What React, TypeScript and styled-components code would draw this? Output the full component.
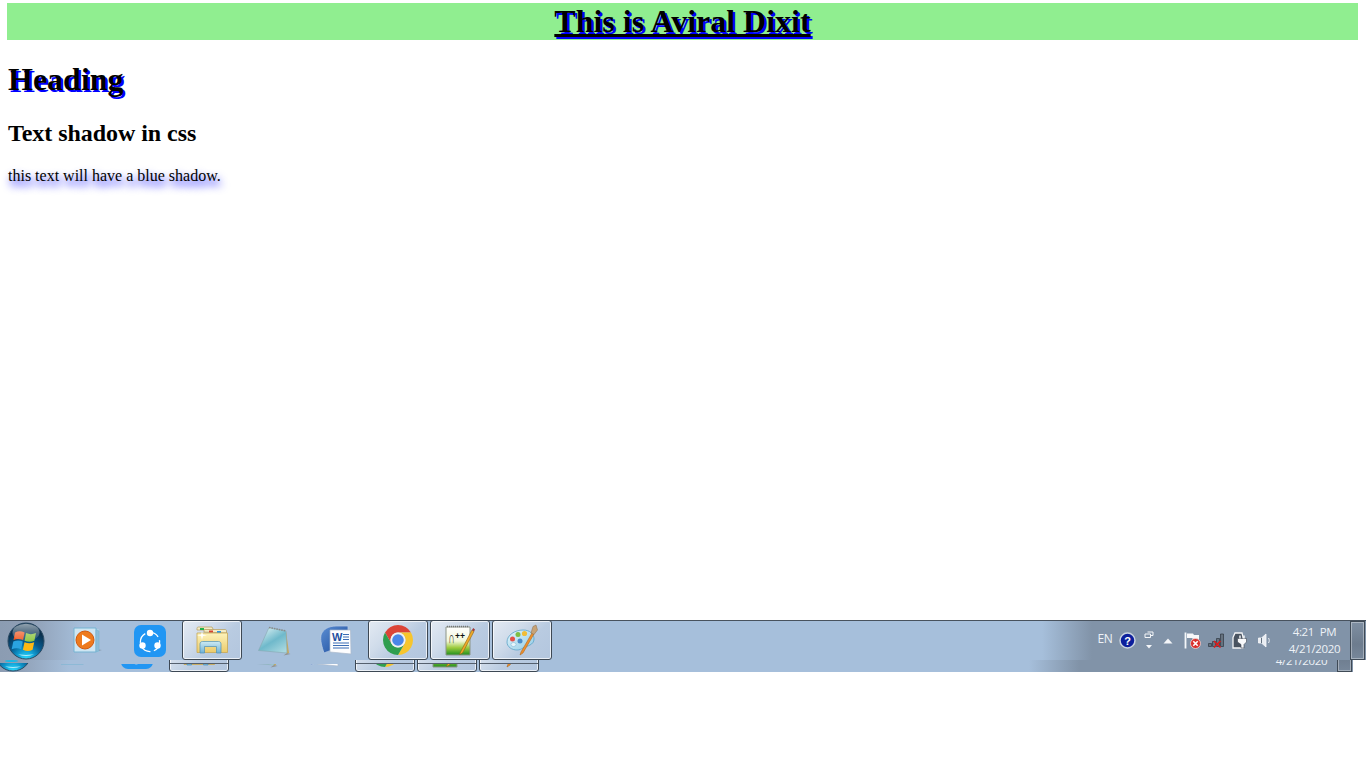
import React from "react";
import styled, { createGlobalStyle } from "styled-components";

const Global = createGlobalStyle`
  html, body { margin: 0; padding: 0; background: #fff; }
  body { font-family: "Liberation Serif", "Times New Roman", serif; color: #000; overflow: hidden; }
`;

const Page = styled.div`
  width: 1366px;
  height: 768px;
  display: flex;
  flex-direction: column;
  background: #fff;
  overflow: hidden;
`;
const Content = styled.main`
  flex: 1;
  padding: 3px 8px 0 8px;
`;
const Banner = styled.h1`
  margin: 0 0 0 -1px;
  height: 37px;
  line-height: 37px;
  background: #90ee90;
  text-align: center;
  font-size: 32px;
  font-weight: 700;
  text-decoration: underline;
  text-shadow: 2px 2px blue;
`;
const Heading = styled.h1`
  margin: 21px 0 0;
  font-size: 32px;
  line-height: 37px;
  font-weight: 700;
  text-shadow: 2px 2px blue;
`;
const SubHeading = styled.h2`
  margin: 22px 0 0;
  font-size: 24px;
  line-height: 27px;
  font-weight: 700;
  letter-spacing: -0.05px;
`;
const Para = styled.p`
  margin: 20px 0 0;
  font-size: 16px;
  line-height: 18px;
  text-shadow: 2px 5px 8px blue;
`;

const Taskbar = styled.div`
  height: 52px;
  margin-bottom: 96px;
  flex: none;
  overflow: hidden;
`;
const Row = styled.div`
  box-sizing: border-box;
  width: 1366px;
  height: 40px;
  display: flex;
  align-items: stretch;
  border-top: 1px solid #48525e;
  background: linear-gradient(90deg, #8b9cb2 0, #8f9fb5 30px, #a6bfdb 82px, #a6bfdb 1042px, #8193a8 1092px, #8193a8 100%);
`;
const GhostClip = styled.div`
  position: relative;
  height: 12px;
  overflow: hidden;
`;
const OrbGlint = styled.div`
  position: absolute;
  left: 5px;
  top: 0;
  width: 13px;
  height: 2px;
  border-radius: 50%;
  background: #19b9e6;
`;
const GhostInner = styled.div`
  margin: -28px 0 0 -13px;
`;
const StartSlot = styled.div`
  width: 58px;
  flex: none;
  box-sizing: border-box;
`;
const OrbBox = styled.div<{ $ghost?: boolean }>`
  height: 100%;
  display: flex;
  align-items: center;
  padding-left: 7px;
  ${(p) => (p.$ghost ? `clip-path: inset(30px 0 0 0);` : ``)}
`;
const Slot = styled.div<{ $active?: boolean; $ghost?: boolean }>`
  position: relative;
  width: 60px;
  margin-right: 2px;
  flex: none;
  box-sizing: border-box;
  border-radius: 3px;
  ${(p) =>
    p.$active
      ? `margin-top: -1px;
         border: 1px solid #3d4854;
         box-shadow: inset 0 0 0 1px rgba(255,255,255,.7);
         background: linear-gradient(135deg, #e3eaf3 0%, #cfdbea 35%, #b9cbe1 60%, #b3c6de 100%);`
      : ``}
  ${(p) =>
    p.$active && p.$ghost
      ? `&::after {
           content: "";
           position: absolute;
           left: 0;
           right: 0;
           top: 30px;
           height: 1px;
           background: #55606e;
         }`
      : ``}
`;
const IconBox = styled.div<{ $ghost?: boolean }>`
  height: 100%;
  display: flex;
  align-items: center;
  justify-content: center;
  ${(p) => (p.$ghost ? `clip-path: inset(31px 0 0 0);` : ``)}
`;
const Tray = styled.div`
  margin-left: auto;
  display: flex;
  align-items: stretch;
  color: #eef2f7;
  font-family: "Open Sans", "Noto Sans", sans-serif;
`;
const TraySlot = styled.div<{ $w: number }>`
  width: ${(p) => p.$w}px;
  flex: none;
  display: flex;
  align-items: center;
  justify-content: center;
`;
const Lang = styled(TraySlot)`
  font-size: 12px;
  letter-spacing: -0.4px;
  padding-bottom: 4px;
  box-sizing: border-box;
`;
const Clock = styled.div<{ $ghost?: boolean }>`
  width: 74px;
  flex: none;
  box-sizing: border-box;
  padding: ${(p) => (p.$ghost ? "19.5px" : "3px")} 0 0 3px;
  text-align: center;
  font-size: 11.5px;
  line-height: 16.5px;
  letter-spacing: -0.35px;
  word-spacing: 3px;
`;
const ShowDesktop = styled.div`
  width: 15px;
  margin-right: 1px;
  flex: none;
  box-sizing: border-box;
  border: 1px solid #3f4a56;
  box-shadow: inset 0 0 0 1px rgba(255, 255, 255, 0.35);
  background: linear-gradient(180deg, #7f8fa2, #6d7c8e 60%, #77879a);
`;

const Orb = () => (
  <svg width="38" height="38" viewBox="0 0 38 38">
    <defs>
      <radialGradient id="orbBody" cx="50%" cy="100%" r="80%">
        <stop offset="0" stopColor="#2fdcff" />
        <stop offset=".28" stopColor="#12a4d8" />
        <stop offset=".6" stopColor="#075a8e" />
        <stop offset="1" stopColor="#0a2f4c" />
      </radialGradient>
      <linearGradient id="orbGloss" x1="0" y1="0" x2="0" y2="1">
        <stop offset="0" stopColor="#fff" stopOpacity=".55" />
        <stop offset="1" stopColor="#fff" stopOpacity=".05" />
      </linearGradient>
    </defs>
    <circle cx="19" cy="19" r="18" fill="url(#orbBody)" stroke="#2b4a63" strokeWidth="1" />
    <path d="M8 10.5c3.2-1.6 6-1.6 9.6 0l-1.5 7.6c-3.2-1.5-6-1.5-9.600 0z" fill="#ef5a24" />
    <path d="M19 11c3.500 1.500 6.300 1.500 10 0l-1.600 7.700c-3.400 1.500-6.300 1.500-9.800 0z" fill="#8cc63f" />
    <path d="M6.300 19.600c3.400-1.500 6.200-1.500 9.500 0l-1.600 7.700c-3.300-1.500-6.100-1.500-9.500 0z" fill="#2aa3e0" />
    <path d="M17.500 20.200c3.400 1.500 6.300 1.500 9.700 0l-1.600 7.600c-3.400 1.600-6.300 1.600-9.700 0z" fill="#fdb813" />
    <ellipse cx="19" cy="10.500" rx="13.500" ry="8.800" fill="url(#orbGloss)" />
    <path d="M11 32.500c5 1.600 11 1.600 16 0-5 .6-11 .6-16 0z" fill="#dffaff" />
  </svg>
);

const MediaPlayer = () => (
  <svg width="30" height="27" viewBox="0 0 30 27">
    <path d="M24 2h2v23h-2z" fill="#a8cfe2" />
    <path d="M1 1h22v24H1z" fill="#cfe6f2" stroke="#75b3d2" />
    <path d="M23 3l3 1v20l-3 1z" fill="#8dbdd6" stroke="#75b3d2" strokeWidth=".6" />
    <path d="M26 24l3-1-3-.5z" fill="#8a9fb3" />
    <circle cx="12" cy="13" r="9" fill="#ee7a1c" stroke="#d2590d" />
    <path d="M9 7.500l9 5.500-9 5.500z" fill="#fff" />
  </svg>
);

const ShareIt = () => (
  <svg width="32" height="32" viewBox="0 0 32 32">
    <rect width="32" height="32" rx="7" fill="#2196f3" />
    <circle cx="16" cy="17" r="9.600" fill="none" stroke="#fff" strokeWidth="1.300" strokeDasharray="11 3.500" />
    <circle cx="16" cy="8" r="3.200" fill="#fff" />
    <circle cx="8.500" cy="20.500" r="3.200" fill="#fff" />
    <circle cx="23.500" cy="20.500" r="3.200" fill="#fff" />
  </svg>
);

const Folder = () => (
  <svg width="32" height="29" viewBox="0 0 32 29">
    <defs>
      <linearGradient id="fold" x1="0" y1="0" x2="0" y2="1">
        <stop offset="0" stopColor="#fdf3bb" />
        <stop offset="1" stopColor="#eccb6b" />
      </linearGradient>
      <linearGradient id="foldBlue" x1="0" y1="0" x2="0" y2="1">
        <stop offset="0" stopColor="#cdeaf3" />
        <stop offset="1" stopColor="#6fb2d6" />
      </linearGradient>
    </defs>
    <path d="M1 4V2.500C1 1.500 1.500 1 2.500 1H16l1.500 3z" fill="#f3ecc8" stroke="#b59b59" strokeWidth=".7" />
    <rect x="4" y="2" width="4" height="2" fill="#22b34b" />
    <path d="M8 6V4.500c0-.8.500-1 1-1h20c1 0 1.500.500 1.500 1.500V7z" fill="#f3ecc8" stroke="#b59b59" strokeWidth=".7" />
    <rect x="13" y="4.500" width="4" height="2" fill="#d8412f" />
    <rect x="21" y="5" width="4" height="2" fill="#2f95dd" />
    <path d="M1 7h30.500v19.500H1z" fill="url(#fold)" stroke="#c6a754" strokeWidth=".8" />
    <path d="M4 27V18c0-1.500 1-2.500 2.500-2.500h16c1.500 0 2.500 1 2.500 2.500v9h-4.500v-6.500h-12V27z" fill="url(#foldBlue)" stroke="#4e90b8" strokeWidth=".7" />
    <path d="M5 10l1 4 1-4 4-.8-4-.8-1-3-1 3-4 .8z" fill="#fff" opacity=".95" />
  </svg>
);

const Notepad = () => (
  <svg width="33" height="30" viewBox="258 625 33 30">
    <defs>
      <linearGradient id="npad" x1="0.1" y1="0" x2="0.8" y2="1">
        <stop offset="0" stopColor="#e2f4f6" />
        <stop offset=".55" stopColor="#6fb9cb" />
        <stop offset="1" stopColor="#a9d8e0" />
      </linearGradient>
    </defs>
    <path d="M287 652l3.500 1-7 1.500z" fill="#8f8f8f" />
    <path d="M286 630l3 22-3 .5z" fill="#c8a85c" />
    <path d="M269 626.500l17 3.500 1 22-28.500-2.500z" fill="url(#npad)" stroke="#86a8b0" strokeWidth=".6" />
    <path d="M269 626.500l17 3.500" stroke="#8a8a8a" strokeWidth="1.600" strokeDasharray="1.500 1" />
  </svg>
);

const Word = ({ plain }: { plain?: boolean }) => (
  <svg width="32" height="31" viewBox="0 0 32 31">
    <defs>
      <linearGradient id="wblue" x1="0" y1="0" x2="1" y2="1">
        <stop offset="0" stopColor="#5c8ed3" />
        <stop offset="1" stopColor="#1a4a9a" />
      </linearGradient>
    </defs>
    <path d="M1 10c2-6 8-9 15-9h12v22c-6 0-15 1-24 5C2 22 0 16 1 10z" fill="url(#wblue)" stroke="#b6c9e2" strokeWidth=".8" />
    <path d="M10 5h20.500l.5 24-21-2z" fill="#fdfdfe" stroke="#aab9cc" strokeWidth=".7" />
    {!plain && (
      <text x="12" y="15.500" fontFamily="Liberation Sans, sans-serif" fontWeight="700" fontSize="11" fill="#1d4f9e">
        W
      </text>
    )}
    <path d="M23 9.500h6M23 12h6M23 14.500h6M13 18h16M13 20.500h16M13 23h16" stroke="#3b6cb4" strokeWidth="1.100" />
  </svg>
);

const Chrome = () => (
  <svg width="30" height="30" viewBox="2 2 44 44">
    <path d="M4.950 13A22 22 0 0 1 43.050 13H24A11 11 0 0 0 14.470 29.500Z" fill="#db4437" />
    <path d="M43.050 13A22 22 0 0 1 24 46L33.530 29.500A11 11 0 0 0 24 13Z" fill="#f7c52d" />
    <path d="M4.950 13L14.470 29.500A11 11 0 0 0 33.530 29.500L24 46A22 22 0 0 1 4.950 13Z" fill="#2f9e4f" />
    <circle cx="24" cy="24" r="11" fill="#f1f1f1" />
    <circle cx="24" cy="24" r="8.500" fill="#4a86e8" />
  </svg>
);

const NotepadPP = ({ plain }: { plain?: boolean }) => (
  <svg width="32" height="32" viewBox="0 0 32 32">
    <defs>
      <linearGradient id="npp" x1="0" y1="0" x2="0" y2="1">
        <stop offset="0" stopColor="#fff" />
        <stop offset=".5" stopColor="#f2f7d9" />
        <stop offset=".74" stopColor="#9ccb3e" />
        <stop offset="1" stopColor="#1f8f1f" />
      </linearGradient>
    </defs>
    <path d="M2 3h24v28H2z" fill="url(#npp)" stroke="#8c9488" />
    <path d="M3 2.500h21" stroke="#777" strokeWidth="1.500" strokeDasharray="1 1" />
    {!plain && (
      <>
        <text transform="translate(4.500 19) scale(.75 1.500)" fontFamily="Liberation Sans, sans-serif" fontWeight="700" fontSize="11" fill="#111">
          ∩
        </text>
        <text x="11" y="15" fontFamily="Liberation Sans, sans-serif" fontWeight="700" fontSize="8.500" fill="#111">
          ++
        </text>
      </>
    )}
    <path d="M17 27l-1.500 3.500 3-1.500L30 7.500l-2-1.500z" fill="#eea928" stroke="#8d6516" strokeWidth=".6" />
    <path d="M28 6l2 1.500 1-2-1.800-1.500z" fill="#a33b3b" />
  </svg>
);

const Palette = () => (
  <svg width="33" height="32" viewBox="0 0 33 32">
    <defs>
      <linearGradient id="pal" x1="0" y1="0" x2="1" y2="1">
        <stop offset="0" stopColor="#e6f5fb" />
        <stop offset="1" stopColor="#8fcbe6" />
      </linearGradient>
    </defs>
    <path d="M1 18C1 11 9 6 17 6c7 0 11 4 11 9 0 6-7 7-11 9-2 1-3 2-6 2-5 0-10-3-10-8z" fill="url(#pal)" stroke="#5aa3c8" strokeWidth=".8" />
    <ellipse cx="7.500" cy="20.500" rx="2.600" ry="2" fill="#e8f6fc" stroke="#76b3d0" strokeWidth=".5" />
    <circle cx="6.500" cy="15" r="2.500" fill="#e3504a" />
    <circle cx="12" cy="10.500" r="2.500" fill="#7ebe45" />
    <circle cx="18.500" cy="9.500" r="2.600" fill="#f1bd36" />
    <circle cx="14" cy="17" r="2.500" fill="#4b8cc9" />
    <path d="M14 31l1-3 11-19 2 1-11 19z" fill="#ee8f2c" stroke="#a75f12" strokeWidth=".5" />
    <path d="M25 9l3 1.500 3.500-4.500L30 1l-3 1.500z" fill="#c7a377" stroke="#8d6d46" strokeWidth=".5" />
  </svg>
);

const Help = () => (
  <svg width="17" height="17" viewBox="0 0 17 17">
    <circle cx="8.500" cy="8.500" r="7.500" fill="#0c1f9c" stroke="#c9d3df" strokeWidth="1.500" />
    <text x="8.500" y="12.500" textAnchor="middle" fontFamily="Liberation Sans, sans-serif" fontWeight="700" fontSize="11" fill="#fff">
      ?
    </text>
  </svg>
);
const Switcher = () => (
  <svg width="10" height="20" viewBox="0 0 10 20">
    <path d="M3.500 1h5.500v3.500H7M1 3h5.500v3.500H1z" fill="none" stroke="#f4f6f9" strokeWidth="1" />
    <path d="M2 14h6l-3 3.500z" fill="#f4f6f9" />
  </svg>
);
const Arrow = () => (
  <svg width="10" height="6" viewBox="0 0 10 6">
    <path d="M0.500 5.500L5 .5l4.500 5z" fill="#f4f6f9" />
  </svg>
);
const Flag = () => (
  <svg width="17" height="17" viewBox="0 0 17 17">
    <path d="M1.500 .5v16" stroke="#f4f6f9" strokeWidth="1.800" />
    <path d="M3 1.500h6l1 1.500h5v4H9l-1-1H3z" fill="#f7f8fa" />
    <circle cx="11.500" cy="11.500" r="5" fill="#d9302c" stroke="#f4d6d4" strokeWidth=".8" />
    <path d="M9.300 9.300l4.400 4.400M13.700 9.300l-4.400 4.400" stroke="#fff" strokeWidth="1.600" />
  </svg>
);
const Network = () => (
  <svg width="16" height="15" viewBox="0 0 16 15">
    <path d="M.5 10.500h3v3h-3zM4.500 8.500h3v5h-3zM8.500 5.500h3v8h-3zM12.500 1h3v12.500h-3z" fill="#66727f" stroke="#2e3640" strokeWidth=".7" />
    <path d="M6 8l6.500 6.500M12.500 8L6 14.500" stroke="#e01818" strokeWidth="1.500" />
  </svg>
);
const Power = () => (
  <svg width="16" height="17" viewBox="0 0 16 17">
    <path d="M1 5.500L3 1h7l1 4v11H1z" fill="#4a5461" stroke="#f5f6f8" strokeWidth="1.300" />
    <path d="M5.500 6.500h9v3.500l-2.500 2.500v3.500H9v-3.500L5.500 10z" fill="#f8f9fb" stroke="#3c4551" strokeWidth=".6" />
    <path d="M8 3.500v3M12 3.500v3" stroke="#f8f9fb" strokeWidth="1.400" />
  </svg>
);
const Speaker = () => (
  <svg width="13" height="15" viewBox="0 0 13 15">
    <path d="M.5 5h3l4.500-4v13l-4.500-4h-3z" fill="#e9edf2" stroke="#f7f8fa" strokeWidth=".8" />
    <path d="M3.500 5v5" stroke="#64717f" strokeWidth="1" />
    <path d="M10.500 5c1 1.500 1 3.500 0 5" fill="none" stroke="#eef1f5" strokeWidth="1" />
  </svg>
);

const TaskRow = ({ ghost }: { ghost?: boolean }) => (
  <Row>
    <StartSlot>
      <OrbBox $ghost={ghost}>
        <Orb />
      </OrbBox>
    </StartSlot>
    <Slot><IconBox $ghost={ghost}><MediaPlayer /></IconBox></Slot>
    <Slot><IconBox $ghost={ghost}><ShareIt /></IconBox></Slot>
    <Slot $active $ghost={ghost}><IconBox $ghost={ghost}><Folder /></IconBox></Slot>
    <Slot><IconBox $ghost={ghost}><Notepad /></IconBox></Slot>
    <Slot><IconBox $ghost={ghost}><Word plain={ghost} /></IconBox></Slot>
    <Slot $active $ghost={ghost}><IconBox $ghost={ghost}><Chrome /></IconBox></Slot>
    <Slot $active $ghost={ghost}><IconBox $ghost={ghost}><NotepadPP plain={ghost} /></IconBox></Slot>
    <Slot $active $ghost={ghost}><IconBox $ghost={ghost}><Palette /></IconBox></Slot>
    <Tray>
      {!ghost && (
        <>
          <Lang $w={20}>EN</Lang>
          <TraySlot $w={24}><Help /></TraySlot>
          <TraySlot $w={20}><Switcher /></TraySlot>
          <TraySlot $w={17}><Arrow /></TraySlot>
          <TraySlot $w={4} />
          <TraySlot $w={24}><Flag /></TraySlot>
          <TraySlot $w={24}><Network /></TraySlot>
          <TraySlot $w={24}><Power /></TraySlot>
          <TraySlot $w={24}><Speaker /></TraySlot>
        </>
      )}
      {ghost ? (
        <Clock $ghost>4/21/2020</Clock>
      ) : (
        <Clock>
          4:21 PM
          <br />
          4/21/2020
        </Clock>
      )}
      <ShowDesktop />
    </Tray>
  </Row>
);

export default function App() {
  return (
    <Page>
      <Global />
      <Content>
        <Banner>This is Aviral Dixit</Banner>
        <Heading>Heading</Heading>
        <SubHeading>Text shadow in css</SubHeading>
        <Para>this text will have a blue shadow.</Para>
      </Content>
      <Taskbar>
        <TaskRow />
        <GhostClip>
          <GhostInner>
            <TaskRow ghost />
          </GhostInner>
          <OrbGlint />
        </GhostClip>
      </Taskbar>
    </Page>
  );
}
